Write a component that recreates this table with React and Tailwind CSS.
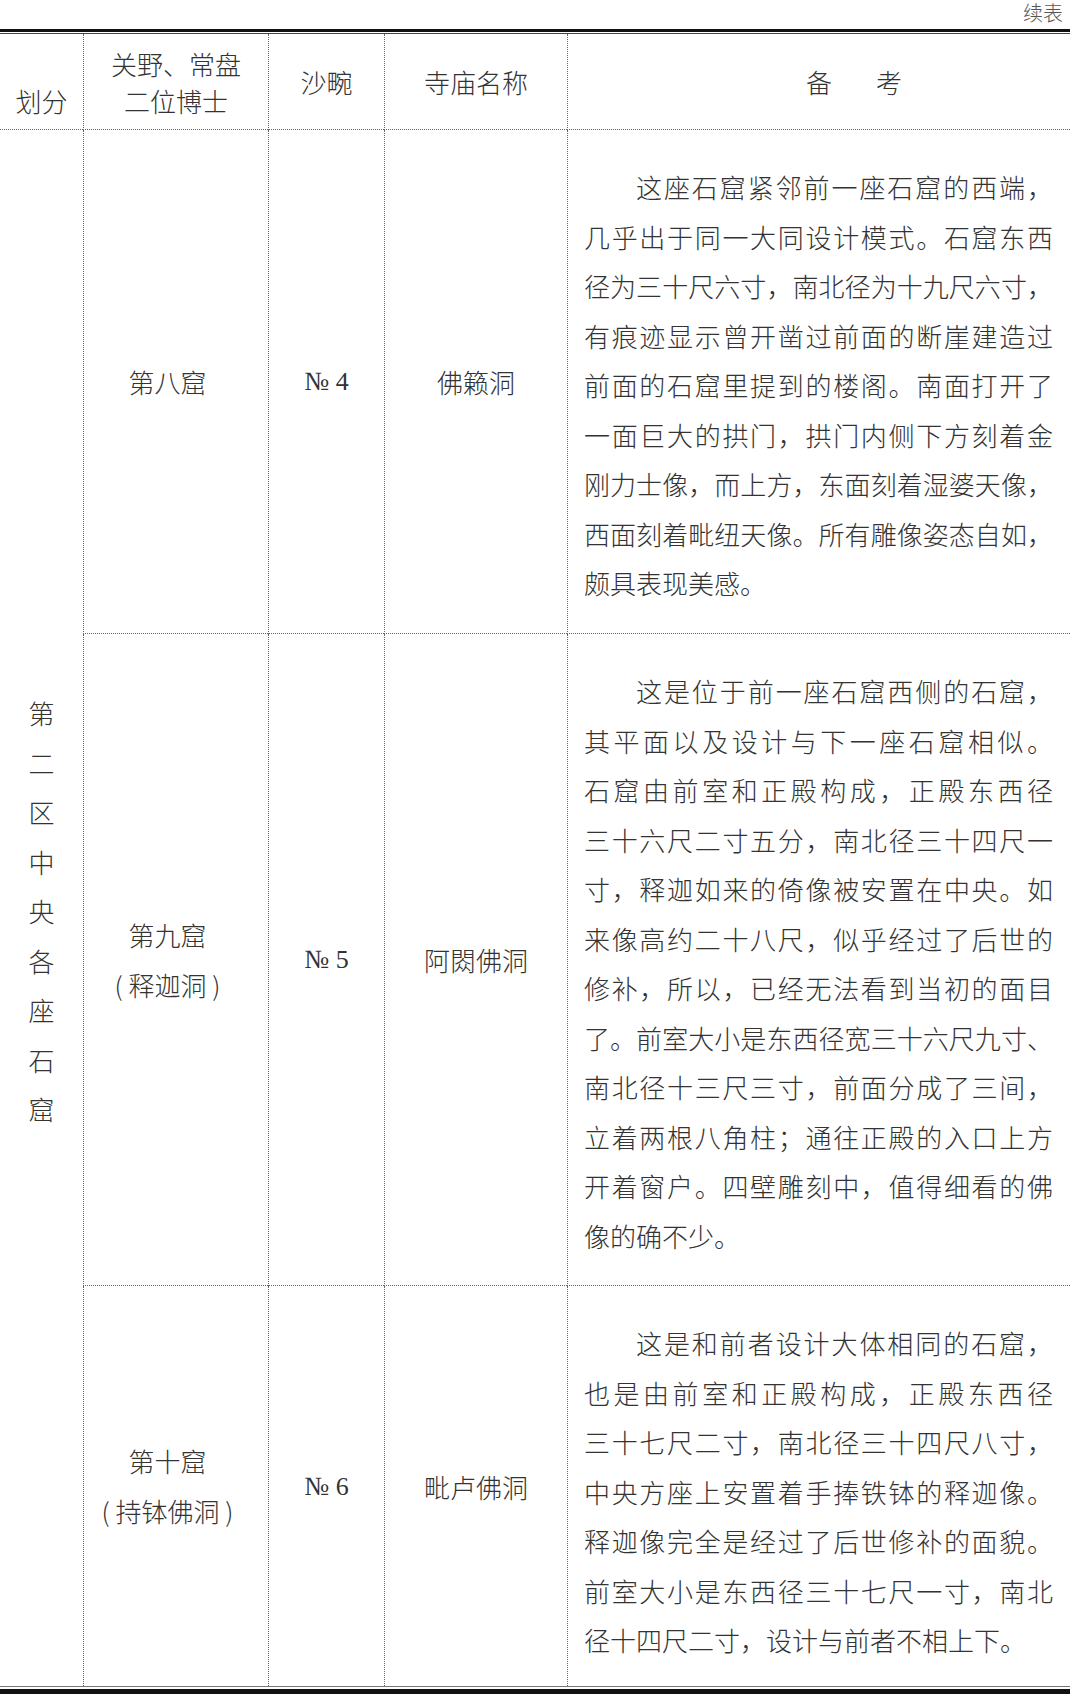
const CJK = { fontFamily: '"Noto Sans CJK SC", "Noto Sans", sans-serif' };

const ROWS = [
  {
    cave: ['第八窟'],
    no: '4',
    name: '佛籁洞',
    lines: [
      '这座石窟紧邻前一座石窟的西端，',
      '几乎出于同一大同设计模式。石窟东西',
      '径为三十尺六寸，南北径为十九尺六寸，',
      '有痕迹显示曾开凿过前面的断崖建造过',
      '前面的石窟里提到的楼阁。南面打开了',
      '一面巨大的拱门，拱门内侧下方刻着金',
      '刚力士像，而上方，东面刻着湿婆天像，',
      '西面刻着毗纽天像。所有雕像姿态自如，',
      '颇具表现美感。',
    ],
  },
  {
    cave: ['第九窟', '( 释迦洞 )'],
    no: '5',
    name: '阿閦佛洞',
    lines: [
      '这是位于前一座石窟西侧的石窟，',
      '其平面以及设计与下一座石窟相似。',
      '石窟由前室和正殿构成，正殿东西径',
      '三十六尺二寸五分，南北径三十四尺一',
      '寸，释迦如来的倚像被安置在中央。如',
      '来像高约二十八尺，似乎经过了后世的',
      '修补，所以，已经无法看到当初的面目',
      '了。前室大小是东西径宽三十六尺九寸、',
      '南北径十三尺三寸，前面分成了三间，',
      '立着两根八角柱；通往正殿的入口上方',
      '开着窗户。四壁雕刻中，值得细看的佛',
      '像的确不少。',
    ],
  },
  {
    cave: ['第十窟', '( 持钵佛洞 )'],
    no: '6',
    name: '毗卢佛洞',
    lines: [
      '这是和前者设计大体相同的石窟，',
      '也是由前室和正殿构成，正殿东西径',
      '三十七尺二寸，南北径三十四尺八寸，',
      '中央方座上安置着手捧铁钵的释迦像。',
      '释迦像完全是经过了后世修补的面貌。',
      '前室大小是东西径三十七尺一寸，南北',
      '径十四尺二寸，设计与前者不相上下。',
    ],
  },
];

const line = 'border-dotted border-[#666]';

function Note({ lines }) {
  return (
    <div className="pt-[32px] pl-[16px] pr-[17px] text-[26px] leading-[49.5px]">
      {lines.map((t, i) => {
        const last = i === lines.length - 1;
        return (
          <div
            key={i}
            className={`${i === 0 ? 'indent-[2em]' : ''} ${last ? 'text-left' : 'text-justify [text-align-last:justify]'}`}
          >
            {t}
          </div>
        );
      })}
    </div>
  );
}

export default function App() {
  return (
    <div className="w-[1070px] bg-white text-[#333] font-light" style={CJK}>
      <div className="h-[29px] flex justify-end items-start pt-[2px] pr-[7px] text-[20px] leading-[22px] text-[#555]">
        续表
      </div>
      <div className="h-[3px] bg-[#111]" />
      <div className="h-[1px]" />
      <div className="h-[1px] bg-[#444]" />

      <div className="grid grid-cols-[83px_185px_116px_183px_503px] grid-rows-[96px_504px_652px_400px] text-[26px]">
        {/* header */}
        <div className={`${line} border-b flex items-end justify-center pb-[10px] leading-[37px]`}>划分</div>
        <div className={`${line} border-b border-l flex flex-col items-center justify-center leading-[37px]`}>
          <div>关野、常盘</div>
          <div>二位博士</div>
        </div>
        <div className={`${line} border-b border-l flex items-center justify-center`}>沙畹</div>
        <div className={`${line} border-b border-l flex items-center justify-center`}>寺庙名称</div>
        <div className={`${line} border-b border-l flex items-center justify-center gap-[44px] pl-[70px]`}>
          <span>备</span>
          <span>考</span>
        </div>

        {/* left merged column */}
        <div className="row-span-3 flex flex-col items-center justify-center pt-[6px] leading-[49.5px]">
          {'第二区中央各座石窟'.split('').map((c, i) => (
            <div key={i}>{c}</div>
          ))}
        </div>

        {ROWS.map((r, i) => {
          const b = i < ROWS.length - 1 ? 'border-b' : '';
          return [
            <div
              key={`c${i}`}
              className={`${line} ${b} border-l flex flex-col items-center justify-center pr-[17px] leading-[50px]`}
            >
              {r.cave.map((c) => (
                <div key={c}>{c}</div>
              ))}
            </div>,
            <div
              key={`n${i}`}
              className={`${line} ${b} border-l flex items-center justify-center`}
              style={{ fontFamily: '"Liberation Serif", serif' }}
            >
              № {r.no}
            </div>,
            <div key={`t${i}`} className={`${line} ${b} border-l flex items-center justify-center`}>
              {r.name}
            </div>,
            <div key={`m${i}`} className={`${line} ${b} border-l`}>
              <Note lines={r.lines} />
            </div>,
          ];
        })}
      </div>

      <div className="h-[1px] bg-[#777]" />
      <div className="h-[2px]" />
      <div className="h-[5px] bg-[#111]" />
    </div>
  );
}
